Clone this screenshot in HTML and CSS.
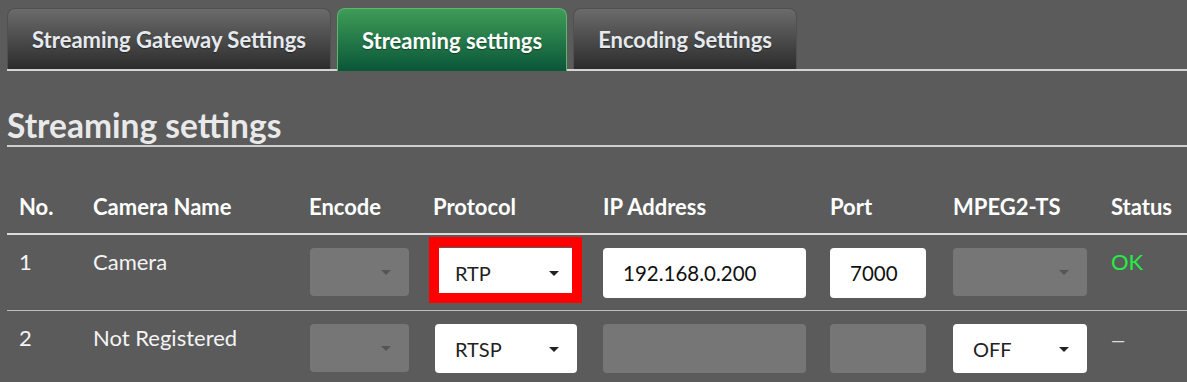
FILE: index.html
```html
<!DOCTYPE html>
<html lang="en">
<head>
    <meta charset="UTF-8">
    <meta name="viewport" content="width=device-width, initial-scale=1.0">
    <title>Streaming settings</title>
    <link rel="stylesheet" href="styles.css">
</head>
<body>
    <div class="tabs">
        <div class="tab">Streaming Gateway Settings</div>
        <div class="tab active">Streaming settings</div>
        <div class="tab">Encoding Settings</div>
    </div>

    <h2 class="section-title">Streaming settings</h2>

    <table class="stream-table">
        <colgroup>
            <col class="col-no">
            <col class="col-name">
            <col class="col-encode">
            <col class="col-protocol">
            <col class="col-ip">
            <col class="col-port">
            <col class="col-ts">
            <col>
        </colgroup>
        <thead>
            <tr>
                <th>No.</th>
                <th>Camera Name</th>
                <th>Encode</th>
                <th>Protocol</th>
                <th>IP Address</th>
                <th>Port</th>
                <th>MPEG2-TS</th>
                <th>Status</th>
            </tr>
        </thead>
        <tbody>
            <tr>
                <td class="txt">1</td>
                <td class="txt">Camera</td>
                <td><div class="select encode disabled"><span class="caret"></span></div></td>
                <td>
                    <div class="select protocol marked">RTP<span class="caret"></span><span class="highlight"></span></div>
                </td>
                <td><input class="field ip" type="text" value="192.168.0.200"></td>
                <td><input class="field port" type="text" value="7000"></td>
                <td><div class="select ts disabled"><span class="caret"></span></div></td>
                <td class="txt status-ok">OK</td>
            </tr>
            <tr>
                <td class="txt">2</td>
                <td class="txt">Not Registered</td>
                <td><div class="select encode disabled"><span class="caret"></span></div></td>
                <td><div class="select protocol">RTSP<span class="caret"></span></div></td>
                <td><input class="field ip" type="text" disabled></td>
                <td><input class="field port" type="text" disabled></td>
                <td><div class="select ts">OFF<span class="caret"></span></div></td>
                <td class="txt status-none">&mdash;</td>
            </tr>
        </tbody>
    </table>
</body>
</html>
```

FILE: styles.css
```css
body {
    background-color: #5b5b5b;
    color: #f2f2f2;
    font-family: 'Lato', 'Liberation Sans', sans-serif;
    margin: 0;
    padding: 8px 0 0 7px;
    overflow: hidden;
}
.tabs {
    display: flex;
    gap: 6px;
    border-bottom: 2px solid #d4d4d4;
    height: 61px;
}
.tab {
    height: 61px;
    padding: 0 24px;
    box-sizing: border-box;
    display: flex;
    align-items: center;
    font-size: 22px;
    font-weight: bold;
    color: #e6eaee;
    background: linear-gradient(to bottom, #6b6b6b, #2c2c2c);
    border: 1px solid #505050;
    border-bottom: none;
    border-radius: 8px 8px 0 0;
    text-shadow: 0 1px 1px rgba(0, 0, 0, 0.4);
}
.tab.active {
    color: #ffffff;
    background: linear-gradient(to bottom, #3f9c58, #0a5639);
    border-color: #5cb66c;
    height: 63px;
}
.section-title {
    margin: 34px 0 0 0;
    font-size: 33.5px;
    font-weight: bold;
    color: #e9e9e9;
    line-height: 40px;
    border-bottom: 2px solid #cfcfcf;
}
.stream-table {
    width: 1180px;
    table-layout: fixed;
    border-collapse: collapse;
    margin-top: 46px;
}
.col-no { width: 86px; }
.col-name { width: 216px; }
.col-encode { width: 124px; }
.col-protocol { width: 170px; }
.col-ip { width: 227px; }
.col-port { width: 123px; }
.col-ts { width: 158px; }
.stream-table th {
    text-align: left;
    font-size: 22px;
    font-weight: bold;
    color: #ffffff;
    padding: 0 0 13px 0;
    border-bottom: 2px solid #dcdcdc;
}
.stream-table th:first-child,
.stream-table td:first-child {
    padding-left: 12px;
}
.stream-table td {
    vertical-align: top;
    padding: 13px 0 13px 0;
    font-size: 22px;
}
.stream-table tbody tr:first-child td {
    border-bottom: 1px solid #bdbdbd;
    padding-bottom: 12px;
}
.stream-table td.txt {
    padding-top: 13px;
    color: #f4f4f4;
}
.stream-table td.status-ok {
    color: #22ee44;
}
.stream-table td.status-none {
    color: #dddddd;
    font-size: 18px;
    padding-top: 18px;
}
.select {
    position: relative;
    height: 49px;
    box-sizing: border-box;
    border-radius: 4px;
    background-color: #ffffff;
    color: #222;
    font-size: 20px;
    padding-left: 20px;
    display: flex;
    align-items: center;
}
.select.disabled {
    background-color: #767676;
    height: 48px;
}
.select.encode { width: 99px; margin-left: 1px; }
.select.protocol { width: 142px; margin-left: 2px; }
.select.ts { width: 134px; }
.caret {
    position: absolute;
    right: 18px;
    top: 50%;
    margin-top: -2px;
    width: 0;
    height: 0;
    border-left: 5px solid transparent;
    border-right: 5px solid transparent;
    border-top: 5px solid #222;
}
.select.disabled .caret {
    border-top-color: #555;
}
.highlight {
    position: absolute;
    left: -6px;
    right: -5px;
    top: -11px;
    bottom: -6px;
    border: 10px solid #ff0000;
}
.field {
    height: 50px;
    box-sizing: border-box;
    border: none;
    border-radius: 4px;
    background-color: #ffffff;
    color: #111;
    font-family: inherit;
    font-size: 20.5px;
    padding: 0 0 0 20px;
    margin: 0;
    display: block;
}
.field:disabled {
    background-color: #767676;
    height: 49px;
}
.field.ip { width: 203px; }
.field.port { width: 96px; }
```
